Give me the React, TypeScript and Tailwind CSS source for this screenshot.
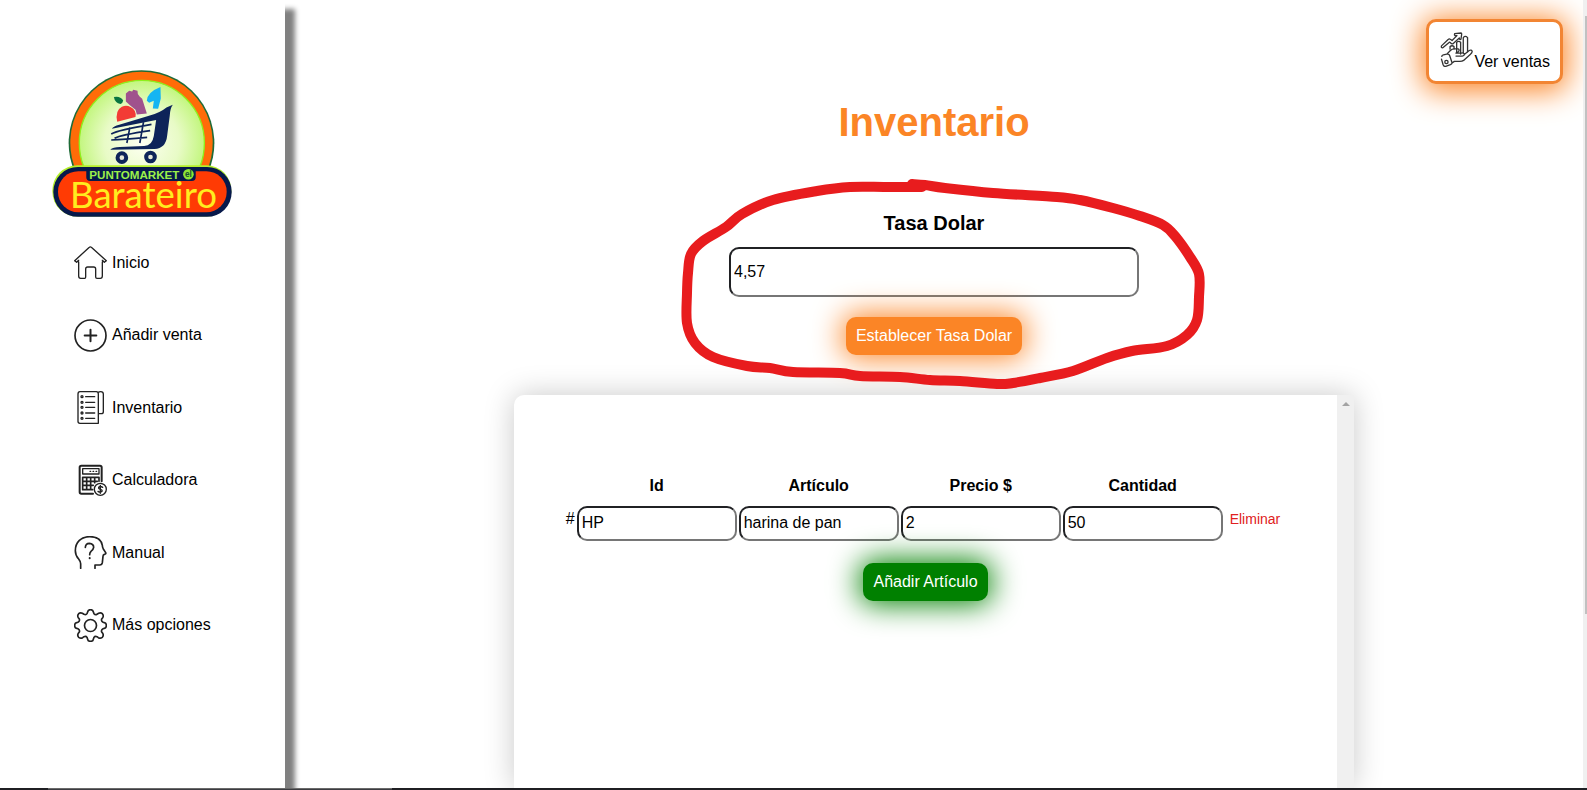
import type { ReactNode } from "react";

function Icon({ children, stroke = 5 }: { children: ReactNode; stroke?: number }) {
  return (
    <svg
      viewBox="0 0 99 99"
      className="size-[33px] shrink-0"
      fill="none"
      stroke="#222"
      strokeWidth={stroke}
      strokeLinecap="round"
      strokeLinejoin="round"
      aria-hidden="true"
    >
      {children}
    </svg>
  );
}

function HomeIcon() {
  return (
    <Icon stroke={4}>
      <path d="M14 43 8 49 2 44 46 4Q49 1 52 4L97 44 91 49 85 43M14 48V90Q14 97 20 97H32Q35 97 35 93V69Q35 63 41 63H59Q65 63 65 69V93Q65 97 69 97H79Q85 97 85 90V48" />
    </Icon>
  );
}

function AddIcon() {
  return (
    <Icon>
      <circle cx="49.5" cy="49.5" r="46.5" />
      <path d="M49.5 32V67M32 49.5H67" strokeWidth="6" />
    </Icon>
  );
}

function ListIcon() {
  return (
    <Icon stroke={4}>
      <path d="M12 92V9Q12 2 18 2H67Q73 2 73 9V97H18Q12 97 12 91M73 4Q75 2 80 2 88 2 88 9V62Q88 68 82 68H75" />
      {[17, 34, 49, 66, 82].map((y) => (
        <g key={y}>
          <circle cx="24" cy={y} r="3" />
          <path d={`M35 ${y}H62`} />
        </g>
      ))}
    </Icon>
  );
}

function CalculatorIcon() {
  return (
    <Icon>
      <path d="M57 89H22Q17 89 17 84V10Q17 5 22 5H78Q83 5 83 10V52" strokeWidth="6" />
      <path d="M26 14H75V30H26Z" strokeWidth="4" />
      <path d="M48 22H50M57 22H59M66 22H68" strokeWidth="4" />
      <path d="M26 40H75V52M26 40V77H56M26 52H70M26 64H58M38 40V77M50 40V77M62 40V56" />
      <circle cx="79" cy="76" r="18" strokeWidth="4" />
      <path d="M86 70Q79 65 74 70 73 75 79 76 86 78 84 82 79 87 72 82M79 64V88" strokeWidth="4" />
    </Icon>
  );
}

function ManualIcon() {
  return (
    <Icon>
      <path d="M20 97V83Q20 77 14 69 4 58 4 44C4 18 22 2 47 2C68 2 82 12 85 28Q85 34 88 39L95 50Q97 54 91 55 87 56 87 61L85 80Q84 87 77 87H63V97" />
      <path d="M34 34Q35 22 46 22 59 23 59 34 58 41 51 46 47 50 47 56" />
      <path d="M47 66V67" strokeWidth="6" />
    </Icon>
  );
}

function GearIcon() {
  return (
    <Icon>
      <path d="M41 9Q42 2 49.500 2T58 9L60 14Q64 19 69 16L74 13Q80 10 85 14 90 20 86 26L83 30Q81 36 86 39L91 41Q97 42 97 49.500T91 58L86 60Q81 63 83 69L86 73Q90 79 85 85 79 89 73 86L69 83Q63 80 60 85L58 91Q57 97 49.500 97T41 91L39 85Q36 80 30 83L26 86Q20 89 14 85 9 79 13 73L16 69Q18 63 13 60L8 58Q2 57 2 49.500T8 41L13 39Q18 36 16 30L13 26Q9 20 14 14 19 10 25 13L30 16Q36 19 39 14Z" />
      <circle cx="49.5" cy="49.5" r="18" />
    </Icon>
  );
}

function SalesIcon() {
  return (
    <svg
      viewBox="0 0 99 106"
      className="h-[35px] w-[33px] shrink-0"
      fill="none"
      stroke="#333"
      strokeWidth="4"
      strokeLinecap="round"
      strokeLinejoin="round"
      aria-hidden="true"
    >
      <path d="M4 42 25 22Q28 19 32 23L36 26 51 11 45 11Q42 9 44 5L64 3Q66 4 65 8L63 22Q59 25 58 18L38 36Q34 37 31 32L28 31 8 48Q2 48 4 42Z" />
      <path d="M30 52V44Q36 39 42 44V51M50 62V31Q56 26 62 31V67M70 63V17Q76 10 83 17V60" />
      <path d="M5 74Q5 70 10 69L20 67 31 56Q36 51 43 51H54Q60 53 56 59L48 64M48 73H67Q74 72 73 66 69 62 63 64L48 64M73 68 88 56Q95 53 97 59 97 63 91 68L71 86Q67 89 60 89H43L36 94M22 67Q27 66 29 72L36 93Q36 97 31 99L17 104Q11 105 9 99L4 82" />
      <circle cx="19" cy="91" r="5" />
    </svg>
  );
}

function Logo() {
  return (
    <svg viewBox="36 24 544 450" className="h-[150px] w-[181px] shrink-0" role="img" aria-label="Puntomarket el Barateiro">
      <defs>
        <radialGradient id="glow">
          <stop offset="0" stopColor="#fdfff2" />
          <stop offset="0.600" stopColor="#e8fbc6" />
          <stop offset="1" stopColor="#c3f67f" />
        </radialGradient>
      </defs>
      <path d="M108 345A219 219 0 1 1 502 345Z" fill="#1e6b38" />
      <path d="M114 345A214 214 0 1 1 496 345Z" fill="#ff6c08" />
      <circle cx="306" cy="249" r="188" fill="url(#glow)" stroke="#8df01c" strokeWidth="4" />
      <path d="M222 111Q240 106 250 121 248 130 242 132 225 129 222 111Z" fill="#087540" />
      <path d="M232 185Q225 151 246 140 260 134 272 141 291 151 287 171Z" fill="#f33b35" />
      <path d="M258 100 268 92 277 94 280 89 293 92 294 102 300 110 307 116 321 160 291 163 287 149 272 137 258 124Z" fill="#a0528d" />
      <path d="M321 122Q323 96 362 81L363 115 355 146 339 145 342 122 328 128Z" fill="#14b5f2" />
      <path d="M399 134Q391 145 390 166L382 228Q378 265 344 267L211 269Q219 262 240 261L313 258Q337 258 342 228L349 180 216 206Q221 198 238 194L325 168Q361 158 380 142Z" fill="#0d2459" />
      <path d="M214 222Q235 210 335 193M224 235Q242 225 331 212M214 240Q250 238 322 232M270 202 261 249M311 186 300 249" fill="none" stroke="#0d2459" strokeWidth="5" />
      <circle cx="246" cy="293" r="13" fill="#e6e8d8" stroke="#0d2459" strokeWidth="12" />
      <circle cx="332" cy="291" r="13" fill="#e6e8d8" stroke="#0d2459" strokeWidth="12" />
      <rect x="37" y="316" width="538" height="154" rx="75" fill="#b5f02c" />
      <rect x="40" y="321" width="536" height="150" rx="74" fill="#07194b" />
      <rect x="54" y="334" width="507" height="123" rx="61" fill="#ff3b04" />
      <path d="M139 328H468V351Q468 363 456 363H151Q139 363 139 351Z" fill="#07194b" />
      <text x="148" y="357" fontSize="35" fontWeight="700" fill="#9cf04a" fontFamily="'Liberation Sans', Arial, sans-serif">
        PUNTOMARKET
      </text>
      <circle cx="446" cy="343" r="16" fill="#8be635" />
      <text x="446" y="352" textAnchor="middle" fontSize="25" fontWeight="700" fill="#174d34" fontFamily="'Liberation Sans', Arial, sans-serif">
        el
      </text>
      <text x="311" y="443" textAnchor="middle" fontSize="110" fill="#ffed1f" fontFamily="Lato, sans-serif">
        Barateiro
      </text>
    </svg>
  );
}

const links = [
  { label: "Inicio", icon: <HomeIcon /> },
  { label: "Añadir venta", icon: <AddIcon /> },
  { label: "Inventario", icon: <ListIcon /> },
  { label: "Calculadora", icon: <CalculatorIcon /> },
  { label: "Manual", icon: <ManualIcon /> },
  { label: "Más opciones", icon: <GearIcon /> },
];

const columns = [
  { label: "Id", value: "HP" },
  { label: "Artículo", value: "harina de pan" },
  { label: "Precio $", value: "2" },
  { label: "Cantidad", value: "50" },
];

const field =
  "rounded-[10px] border-2 border-t-[#202124] border-l-[#202124] border-r-[#767676] border-b-[#767676] bg-transparent px-[3px] text-base text-black outline-none";

function Sidebar() {
  return (
    <aside className="relative z-10 flex w-[285px] shrink-0 flex-col items-center bg-white pt-[68px] shadow-[10px_9px_5px_gray]">
      <Logo />
      <nav className="mt-7 flex h-[396px] w-full flex-col justify-between pl-[74px]">
        {links.map((link) => (
          <a key={link.label} href="#" className="flex items-center gap-[5px] text-black">
            {link.icon}
            <span>{link.label}</span>
          </a>
        ))}
      </nav>
    </aside>
  );
}

const strokePoints: [number, number][] = [
  [922, 187], [886, 187], [850, 187], [817, 191], [773, 200], [742, 214], [726, 227], [703, 241], [691, 254],
  [688, 273], [687, 293], [687, 323], [695, 343], [713, 357], [747, 366], [770, 368], [793, 372], [840, 373],
  [860, 376], [900, 377], [930, 380], [960, 381], [997, 384], [1013, 383], [1040, 378], [1073, 371], [1107, 358],
  [1132, 351], [1167, 346], [1187, 335], [1197, 320], [1199, 297], [1199, 274], [1190, 257], [1175, 236],
  [1163, 225], [1140, 216], [1113, 208], [1080, 200], [1057, 197], [993, 193], [945, 188], [925, 185], [912, 184],
];

function smoothPath(points: [number, number][]) {
  let d = `M${points[0][0]} ${points[0][1]}`;
  for (let i = 0; i < points.length - 1; i++) {
    const before = points[Math.max(i - 1, 0)];
    const from = points[i];
    const to = points[i + 1];
    const after = points[Math.min(i + 2, points.length - 1)];
    d += `C${from[0] + (to[0] - before[0]) / 6} ${from[1] + (to[1] - before[1]) / 6} ${to[0] - (after[0] - from[0]) / 6} ${
      to[1] - (after[1] - from[1]) / 6
    } ${to[0]} ${to[1]}`;
  }
  return d;
}

function Scribble() {
  return (
    <svg
      viewBox="670 170 560 230"
      className="pointer-events-none absolute -top-[36px] left-1/2 z-10 h-[230px] w-[560px] -translate-x-[264px]"
      fill="none"
      stroke="#e81c1e"
      strokeWidth="10"
      strokeLinecap="round"
      strokeLinejoin="round"
      aria-hidden="true"
    >
      <path d={smoothPath(strokePoints)} />
    </svg>
  );
}

export default function App() {
  return (
    <div className="flex h-screen flex-col overflow-hidden bg-white font-['Liberation_Sans',Arial,sans-serif] text-base text-black">
      <div className="flex min-h-0 flex-1 overflow-hidden">
        <Sidebar />
        <main className="flex min-w-0 flex-1 flex-col items-center">
          <div className="flex w-full justify-end pt-[19px] pr-5">
            <button
              type="button"
              className="flex h-[65px] items-end gap-px rounded-[10px] border-3 border-[#f28533] bg-white pr-[10px] pb-[10px] pl-[11px] shadow-[0_3px_30px_4px_#fb8526]"
            >
              <span className="pb-1">
                <SalesIcon />
              </span>
              <span className="leading-[18px]">Ver ventas</span>
            </button>
          </div>
          <h1 className="mt-[15px] text-[40px] leading-[46px] font-bold text-[#fb8526]">Inventario</h1>

          <form className="relative mt-[61px] flex w-full flex-col items-center" onSubmit={(e) => e.preventDefault()}>
            <label htmlFor="tasa" className="mt-[5px] text-xl leading-6 font-bold">
              Tasa Dolar
            </label>
            <input id="tasa" defaultValue="4,57" className={`${field} mt-3 h-[50px] w-[410px]`} />
            <button
              type="submit"
              className="mt-5 h-[38px] rounded-[10px] bg-[#fb8526] px-[10px] text-white shadow-[0_0_30px_3px_#fb8526]"
            >
              Establecer Tasa Dolar
            </button>
            <Scribble />
          </form>

          <section className="mt-10 flex min-h-0 w-[840px] max-w-full flex-1 overflow-hidden rounded-tl-[10px] bg-white shadow-[0_0_30px_#c9c9c9]">
            <div className="flex min-w-0 flex-1 flex-col items-center pt-[79px]">
              <table className="border-separate border-spacing-0.5">
                <thead>
                  <tr>
                    <td />
                    {columns.map((c) => (
                      <th key={c.label} scope="col" className="h-[28px] pb-2 text-center align-middle leading-[18px] font-bold">
                        {c.label}
                      </th>
                    ))}
                    <td />
                  </tr>
                </thead>
                <tbody>
                  <tr>
                    <td className="pt-1 align-top leading-[18px]">#</td>
                    {columns.map((c) => (
                      <td key={c.label} className="p-0">
                        <input aria-label={c.label} defaultValue={c.value} className={`${field} block h-[35px] w-[160px] pb-0.5`} />
                      </td>
                    ))}
                    <td className="pt-1 align-top">
                      <button type="button" className="block px-[5px] text-sm leading-[18px] text-[#e02020]">
                        Eliminar
                      </button>
                    </td>
                  </tr>
                </tbody>
              </table>
              <button
                type="button"
                className="mt-5 h-[38px] shrink-0 rounded-[10px] bg-[green] px-[10px] text-white shadow-[0_0_30px_3px_green]"
              >
                Añadir Artículo
              </button>
            </div>
            <div className="flex w-[17px] shrink-0 justify-center bg-[#f0f0f0] pt-[7px]">
              <svg viewBox="0 0 8 4" className="h-1 w-2" fill="#a3a3a3" aria-hidden="true">
                <path d="M0 4 4 0 8 4Z" />
              </svg>
            </div>
          </section>
        </main>
        <div className="flex w-1 shrink-0 justify-end bg-[#f0f0f0] pt-4">
          <div className="h-[598px] w-0.5 bg-[#c1c1c1]" />
        </div>
      </div>
      <div className="z-20 h-0.5 shrink-0 bg-[#1f1f23] pl-12">
        <div className="h-full w-[344px] border-t border-[#6a6a6a] bg-[#3c3c40]" />
      </div>
    </div>
  );
}
